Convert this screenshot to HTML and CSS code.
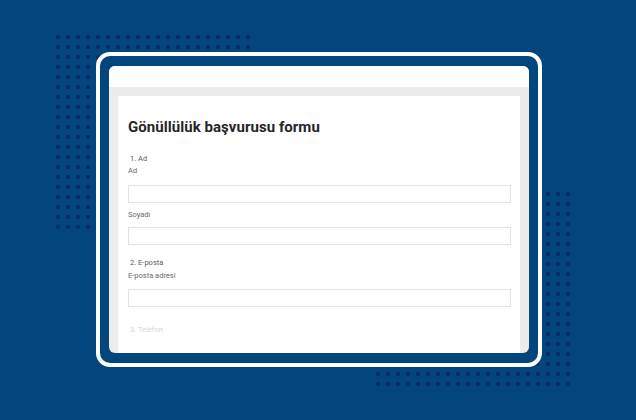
FILE: index.html
```html
<!DOCTYPE html>
<html lang="tr">
<head>
<meta charset="utf-8">
<title>Gönüllülük başvurusu formu</title>
<link rel="stylesheet" href="styles.css">
</head>
<body>
<div class="stage">
  <div class="dots dots-tl"></div>
  <div class="dots dots-br"></div>
  <div class="frame">
    <div class="screen">
      <div class="topbar"></div>
      <div class="canvas">
        <div class="panel">
          <h1 class="title">Gönüllülük başvurusu formu</h1>
          <div class="question">
            <div class="qnum">1. Ad</div>
            <div class="label label-first">Ad</div>
            <div class="input input-first"></div>
            <div class="label label-sub">Soyadı</div>
            <div class="input input-sub"></div>
          </div>
          <div class="question question-next">
            <div class="qnum">2. E-posta</div>
            <div class="label label-email">E-posta adresi</div>
            <div class="input input-email"></div>
          </div>
          <div class="question question-last">
            <div class="qnum qnum-faded">3. Telefon</div>
          </div>
        </div>
      </div>
    </div>
  </div>
</div>
</body>
</html>
```
FILE: styles.css
```css
html, body {
  margin: 0;
  padding: 0;
}
body {
  font-family: "Roboto", "Liberation Sans", sans-serif;
}
.stage {
  position: relative;
  width: 636px;
  height: 420px;
  background: #03467e;
  overflow: hidden;
  box-sizing: border-box;
  padding: 52px 0 0 96px;
}
.dots {
  position: absolute;
  width: 200px;
  height: 200px;
  background-image: radial-gradient(circle, #0b2a62 1.8px, rgba(11, 42, 98, 0) 2.4px);
  background-size: 10px 10px;
}
.dots-tl {
  left: 53px;
  top: 32px;
}
.dots-br {
  left: 373px;
  top: 189px;
}
.frame {
  position: relative;
  z-index: 1;
  width: 446px;
  height: 315px;
  box-sizing: border-box;
  border: 4px solid #ffffff;
  border-radius: 14px;
  background: #03467e;
  padding: 10px 9px;
}
.screen {
  height: 100%;
  display: flex;
  flex-direction: column;
  border-radius: 6px;
  overflow: hidden;
  background: #ececec;
}
.topbar {
  height: 21px;
  background: #ffffff;
  flex: none;
}
.canvas {
  flex: 1;
  display: flex;
  padding: 9px 9px 0 9px;
}
.panel {
  flex: 1;
  background: #ffffff;
  padding: 22px 9px 0 10px;
  overflow: hidden;
}
.title {
  margin: 0 0 16px 0;
  font-family: "Roboto", "Liberation Sans", sans-serif;
  font-size: 15px;
  line-height: 19px;
  font-weight: 700;
  color: #262626;
  letter-spacing: 0.05px;
}
.qnum {
  font-size: 7.5px;
  line-height: 11px;
  color: #5a5a5a;
  padding-left: 2px;
}
.qnum-faded {
  color: #d6d6d6;
}
.label {
  font-size: 7.5px;
  line-height: 11px;
  color: #6a6a6a;
}
.label-first {
  margin-top: 1px;
}
.label-sub {
  margin-top: 6px;
}
.label-email {
  margin-top: 2px;
}
.input {
  height: 18px;
  box-sizing: border-box;
  border: 1px solid #e3e3e3;
  background: #ffffff;
}
.input-first {
  margin-top: 9px;
}
.input-sub {
  margin-top: 7px;
}
.input-email {
  margin-top: 8px;
}
.question-next {
  margin-top: 12px;
}
.question-last {
  margin-top: 17px;
}
```
